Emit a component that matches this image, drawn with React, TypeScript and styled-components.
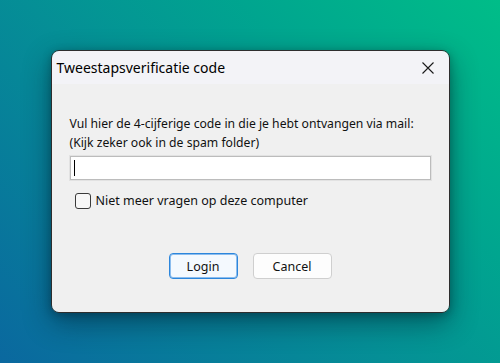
import React from "react";
import styled, { createGlobalStyle } from "styled-components";

const GlobalStyle = createGlobalStyle`
  html, body {
    margin: 0;
    padding: 0;
  }
  body {
    font-family: "Segoe UI", "Noto Sans", "Liberation Sans", sans-serif;
    color: #000;
  }
`;

const Desktop = styled.div`
  width: 500px;
  height: 363px;
  display: flex;
  align-items: center;
  justify-content: center;
  background: linear-gradient(45deg, #0a689f 0%, #058f96 45%, #00a58f 70%, #00bd88 100%);
  overflow: hidden;
`;

const Window = styled.div`
  width: 399px;
  height: 263px;
  box-sizing: border-box;
  display: flex;
  flex-direction: column;
  border: 1px solid #2e2e2e;
  border-radius: 8px;
  overflow: hidden;
  box-shadow: 0 10px 28px rgba(0, 20, 40, 0.45), 0 2px 8px rgba(0, 0, 0, 0.25);
`;

const TitleBar = styled.div`
  height: 33px;
  flex: 0 0 auto;
  display: flex;
  align-items: center;
  justify-content: space-between;
  padding-left: 5px;
  background: #f3f3f7;
`;

const Title = styled.span`
  font-size: 14px;
  line-height: 1;
  padding-top: 1px;
`;

const CloseBox = styled.div`
  width: 42px;
  height: 33px;
  display: flex;
  align-items: center;
  justify-content: center;
`;

const Body = styled.div`
  flex: 1;
  display: flex;
  flex-direction: column;
  background: #f0f0f0;
  padding: 30px 18px 0 18px;
`;

const Prompt = styled.div`
  font-size: 12.2px;
  line-height: 19px;
  color: #111;
`;

const Field = styled.div`
  margin-top: 4px;
  height: 24px;
  box-sizing: border-box;
  border: 1px solid #bcbcbc;
  box-shadow: 0 0 0 1px #e2e2e2;
  background: #fff;
  display: flex;
  align-items: center;
  padding-left: 3px;
`;

const Caret = styled.span`
  width: 1px;
  height: 16px;
  background: #000;
`;

const CheckRow = styled.label`
  margin-top: 12px;
  margin-left: 5px;
  display: flex;
  align-items: center;
  gap: 5px;
  font-size: 12.5px;
  color: #111;
`;

const Box = styled.span`
  width: 16px;
  height: 16px;
  box-sizing: border-box;
  border: 1px solid #3a3a3a;
  border-radius: 3px;
  background: #f7f7f7;
`;

const Buttons = styled.div`
  margin-top: 44px;
  display: flex;
  justify-content: center;
  gap: 15px;
`;

const Button = styled.button<{ $primary?: boolean }>`
  width: ${(p) => (p.$primary ? 69 : 79)}px;
  height: 26px;
  box-sizing: border-box;
  border-radius: 4px;
  font-family: inherit;
  font-size: 12.5px;
  color: #111;
  padding: 0;
  background: ${(p) => (p.$primary ? "#f4f9fe" : "#fdfdfd")};
  border: 1px solid ${(p) => (p.$primary ? "#2c86dc" : "#cfcfcf")};
  box-shadow: ${(p) => (p.$primary ? "inset 0 0 0 1px #8cbdee" : "none")};
`;

export default function App() {
  return (
    <>
      <GlobalStyle />
      <Desktop>
        <Window>
          <TitleBar>
            <Title>Tweestapsverificatie code</Title>
            <CloseBox>
              <svg width="12" height="12" viewBox="0 0 12 12">
                <path d="M0.5 0.5L11.5 11.5M11.5 0.5L0.5 11.5" stroke="#1a1a1a" strokeWidth="1.1" fill="none" />
              </svg>
            </CloseBox>
          </TitleBar>
          <Body>
            <Prompt>
              Vul hier de 4-cijferige code in die je hebt ontvangen via mail:
              <br />
              (Kijk zeker ook in de spam folder)
            </Prompt>
            <Field>
              <Caret />
            </Field>
            <CheckRow>
              <Box />
              Niet meer vragen op deze computer
            </CheckRow>
            <Buttons>
              <Button $primary>Login</Button>
              <Button>Cancel</Button>
            </Buttons>
          </Body>
        </Window>
      </Desktop>
    </>
  );
}
